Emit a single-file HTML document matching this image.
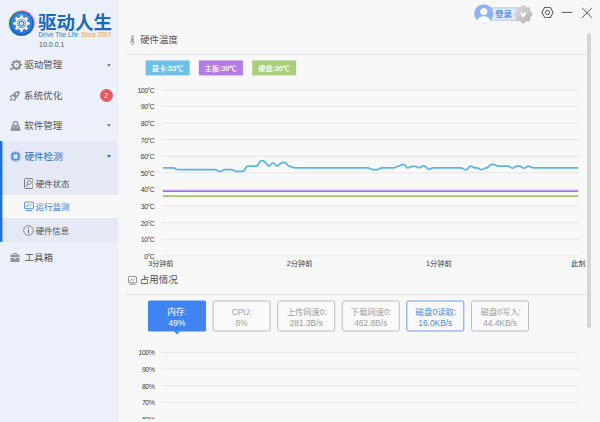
<!DOCTYPE html>
<html lang="zh-CN">
<head>
<meta charset="utf-8">
<title>驱动人生</title>
<style>
*{margin:0;padding:0;box-sizing:border-box}
html,body{width:600px;height:422px;overflow:hidden}
body{position:relative;background:#f8f8f8;font-family:"Liberation Sans",sans-serif;color:#444;font-size:9px;line-height:1}
.abs,.side div,.main div,svg{position:absolute}
.side{position:absolute;left:0;top:0;width:119px;height:422px;background:linear-gradient(90deg,#ebf0fa 0,#ebf0fa 118px,#f1f4f9 118px,#f1f4f9 119px)}
.arr{width:0;height:0;border-left:2.7px solid transparent;border-right:2.7px solid transparent;border-top:3.2px solid #838383}
.main{position:absolute;left:0;top:0;width:600px;height:422px}
.yl{left:119px;width:35.4px;text-align:right;font-size:6.9px;height:8px;line-height:8px;color:#3a3a3a;letter-spacing:-0.45px;white-space:nowrap}
.bx{top:300.5px;width:58px;height:31px;color:#9c9c9c;font-size:7.9px;text-align:center;white-space:nowrap}
.bx span{display:block;height:11.3px;line-height:11.3px}
.bx span:first-child{margin-top:6.2px}
.bx .la{font-size:8.3px}
.bx span+span{font-size:8.4px}
</style>
</head>
<body>
<div class="side">
  <!-- logo -->
  <div style="left:8.200px;top:9.800px;width:26.600px;height:26.600px;border-radius:50%;background:conic-gradient(#f9a9a4 0deg,#f28ee6 60deg,#a79bf6 125deg,#7ddff2 185deg,#8cf0c2 240deg,#eef08c 300deg,#f9a9a4 360deg)"></div>
  <svg style="left:8px;top:9.6px" width="27" height="27" viewBox="0 0 27 27">
    <defs>
      
      <radialGradient id="bg" cx="0.5" cy="0.3" r="0.75">
        <stop offset="0" stop-color="#4a9cec"/><stop offset="1" stop-color="#1f70cf"/>
      </radialGradient>
    </defs>
    
    <circle cx="13.5" cy="13.5" r="12.3" fill="#1d5fb8"/>
    <circle cx="13.5" cy="13.5" r="10.9" fill="url(#bg)"/>
    <g fill="#fcf3ec">
      <circle cx="13.5" cy="13.5" r="6.2"/>
      <g id="teeth">
        <rect x="12.2" y="5.200" width="2.600" height="3.400" rx="0.800"/>
        <rect x="12.2" y="18.400" width="2.600" height="3.400" rx="0.800"/>
        <rect x="5.200" y="12.2" width="3.400" height="2.600" rx="0.800"/>
        <rect x="18.400" y="12.2" width="3.400" height="2.600" rx="0.800"/>
      </g>
      <use href="#teeth" transform="rotate(45 13.5 13.5)"/>
    </g>
    <circle cx="13.5" cy="13.5" r="4.500" fill="#3a86da"/>
    <circle cx="13.5" cy="13.5" r="3.400" fill="none" stroke="#e4eefa" stroke-width="0.900"/>
    <circle cx="13.5" cy="13.5" r="1.600" fill="#fff"/>
  </svg>
  <svg style="left:38px;top:12.5px" width="74" height="19" viewBox="0 -20 4000 1040" preserveAspectRatio="none" role="img" aria-label="驱动人生"><title>驱动人生</title><text x="0" y="880" font-size="1000" font-weight="bold" fill="#1a69bd" font-family="'Liberation Sans','Noto Sans CJK SC',sans-serif">驱动人生</text></svg>
  <div style="left:38.5px;top:30.8px;width:45px;height:8px;line-height:8px;font-size:6.3px;color:#3577c4;white-space:nowrap;letter-spacing:0.05px">Drive The Life</div>
  <div style="left:81px;top:30.8px;width:35px;height:8px;line-height:8px;font-size:6.3px;color:#eaa04a;white-space:nowrap;letter-spacing:-0.18px">Since 2007</div>
  <div style="left:39.1px;top:39.7px;width:40px;height:10px;line-height:10px;font-size:7px;color:#555;white-space:nowrap">10.0.0.1</div>

  <!-- selected group background -->
  <div style="left:0;top:141px;width:118px;height:101px;background:#e4e9f5"></div>
  <div style="left:0;top:195px;width:119px;height:23px;background:#f8f8f8"></div>
  <svg style="left:0;top:141px" width="3" height="101"><rect x="0" y="0" width="2.4" height="100.8" fill="#1f6fe0"/></svg>

  <!-- 驱动管理 -->
  <svg style="left:8.800px;top:59.200px" width="13" height="13" viewBox="0 0 26 26">
    <g fill="#8c919c">
      <circle cx="15" cy="12" r="7.800"/>
      <g id="t2"><path d="M13.200 1.400h3.600l1 4h-5.600zM13.200 22.600h3.600l1-4h-5.600zM4.400 10.200v3.600l4 1v-5.600zM25.600 10.200v3.600l-4 1v-5.600z"/></g>
      <use href="#t2" transform="rotate(45 15 12)"/>
    </g>
    <circle cx="15" cy="12" r="4.800" fill="#f4f6fb"/>
    <circle cx="15" cy="12" r="1.500" fill="#8c919c"/>
    <path d="M4.600 19.600 9 17.500" stroke="#8c919c" stroke-width="1.600"/>
    <circle cx="4.400" cy="19.800" r="3" fill="#8c919c"/>
    <circle cx="4.400" cy="19.800" r="1.300" fill="#ebf0fa"/>
    <circle cx="22.500" cy="3" r="1.100" fill="#a6abb5"/>
  </svg>
  <div class="arr" style="left:107px;top:63.600px"></div>

  <!-- 系统优化 -->
  <svg style="left:9.200px;top:90px" width="11.800" height="11.800" viewBox="0 0 24 24">
    <path fill="#8c919c" fill-rule="evenodd" d="M22 2C15 2 9.500 5 6.300 10.600L13.400 17.700C19 14.500 22 9 22 2zM15.800 10.500a2.300 2.300 0 1 1 0-4.600 2.300 2.300 0 0 1 0 4.600zM6.500 9.800 2.300 11 1 15.200l4.600-.900zM14.200 17.500 13 21.700 8.800 23l.900-4.600zM5.300 15.800C3.200 16.800 2 19.500 2 22c2.500 0 5.200-1.200 6.200-3.300z"/>
  </svg>
  <div style="left:99.700px;top:89.200px;width:13px;height:13px;border-radius:50%;background:#ea5a5b;color:#fff;font-size:6.800px;line-height:13px;text-align:center">2</div>

  <!-- 软件管理 -->
  <svg style="left:10px;top:119.500px" width="11" height="12" viewBox="0 0 22 24">
    <path fill="none" stroke="#90959f" stroke-width="2.600" d="M6.500 10V7.500a4.500 4.500 0 0 1 9 0V10"/>
    <path fill="#90959f" d="M3.500 9.500h15l2.500 12.500H1z"/>
    <circle cx="7.500" cy="13.500" r="1.300" fill="#ebf0fa"/><circle cx="14.500" cy="13.500" r="1.300" fill="#ebf0fa"/>
  </svg>
  <div class="arr" style="left:107px;top:124.400px"></div>

  <!-- 硬件检测 -->
  <svg style="left:9.800px;top:151.200px" width="11" height="11" viewBox="0 0 22 22">
    <g stroke="#4a8df5" fill="none">
      <rect x="5" y="5" width="12" height="12" stroke-width="3.400"/>
      <path stroke-width="1.700" d="M7.500 1v3M11 1v3M14.500 1v3M7.500 18v3M11 18v3M14.500 18v3M1 7.500h3M1 11h3M1 14.500h3M18 7.500h3M18 11h3M18 14.500h3"/>
    </g>
  </svg>
  <div class="arr" style="left:107px;top:155.200px;border-top-color:#2a74e4"></div>

  <!-- 硬件状态 -->
  <svg style="left:23.800px;top:177.800px" width="9.500" height="11" viewBox="0 0 19 22">
    <rect x="1.100" y="1.100" width="16.800" height="19.800" rx="2" fill="none" stroke="#666" stroke-width="1.700"/>
    <circle cx="10.500" cy="9" r="3.800" fill="none" stroke="#666" stroke-width="1.500"/>
    <path d="M8 12 4.500 17.500" stroke="#666" stroke-width="1.900" fill="none"/>
  </svg>

  <!-- 运行监测 -->
  <svg style="left:23.800px;top:201px" width="10" height="11" viewBox="0 0 20 22">
    <rect x="1.100" y="2.100" width="17.800" height="13.300" rx="1.500" fill="none" stroke="#3c80e4" stroke-width="1.700"/>
    <path d="M4 12l4-4.500 3 2.500 4.500-4.500" fill="none" stroke="#3c80e4" stroke-width="1.500"/>
    <path d="M3.500 19.300h13" stroke="#3c80e4" stroke-width="1.700"/>
  </svg>

  <!-- 硬件信息 -->
  <svg style="left:23px;top:225px" width="11" height="11" viewBox="0 0 22 22">
    <circle cx="11" cy="11" r="9.600" fill="none" stroke="#666" stroke-width="1.500"/>
    <circle cx="11" cy="6.300" r="1.300" fill="#666"/>
    <path d="M11 9.500v7" stroke="#666" stroke-width="1.900"/>
  </svg>

  <!-- 工具箱 -->
  <svg style="left:10.100px;top:252.300px" width="10" height="10.600" viewBox="0 0 20 20" preserveAspectRatio="none">
    <path fill="none" stroke="#90959f" stroke-width="2" d="M7 5V3h6v2"/>
    <path fill="#90959f" d="M1 5h18v5H1zM1 11.500h7.500v1.500h3v-1.500H19V19H1z"/>
  </svg>
</div>

<!-- top right controls -->
<svg style="left:484px;top:7px" width="40" height="15"><rect x="0.500" y="0.900" width="38" height="12.300" rx="2" fill="#e0eafb" stroke="#adc8f6"/></svg>
<svg style="left:474.200px;top:4.200px" width="19.600" height="19.600" viewBox="0 0 36 36">
  <defs><clipPath id="av"><circle cx="18" cy="18" r="17.600"/></clipPath></defs>
  <circle cx="18" cy="18" r="17.600" fill="#8db3f6"/>
  <g clip-path="url(#av)" fill="#fff">
    <circle cx="18" cy="14" r="6.600"/>
    <path d="M5 36c0-9 5.500-13.500 13-13.500S31 27 31 36z"/>
  </g>
</svg>
<svg style="left:513.300px;top:3.900px" width="20.500" height="20.500" viewBox="0 0 20.500 20.500">
  <defs><linearGradient id="vg" x1="0" y1="0" x2="1" y2="1"><stop offset="0" stop-color="#dadada"/><stop offset="1" stop-color="#b4b4b4"/></linearGradient></defs>
  <path d="M10.250 1.550 L12.890 3.880 L16.400 4.100 L16.620 7.610 L18.950 10.250 L16.620 12.890 L16.400 16.400 L12.890 16.620 L10.250 18.950 L7.610 16.620 L4.100 16.400 L3.880 12.890 L1.550 10.250 L3.880 7.610 L4.100 4.100 L7.610 3.880Z" fill="url(#vg)" stroke="url(#vg)" stroke-width="1.500" stroke-linejoin="round"/>
  <path d="M7.900 8.300l2.350 4.200 2.350-4.200" fill="none" stroke="#fff" stroke-width="1.800" stroke-linejoin="round"/>
</svg>
<svg style="left:540.500px;top:6.300px" width="13" height="13" viewBox="0 0 28 28">
  <path d="M14 1.800 24.600 7.900v12.200L14 26.200 3.400 20.100V7.900z" transform="rotate(30 14 14)" fill="none" stroke="#4d4d4d" stroke-width="2"/>
  <circle cx="14" cy="14" r="4.700" fill="none" stroke="#4d4d4d" stroke-width="2"/>
</svg>
<svg style="left:560px;top:6px" width="36" height="14" viewBox="0 0 36 14">
  <path d="M2 6.400H12.200" stroke="#555" stroke-width="1"/>
  <path d="M22.200 2 31.800 11.600M31.800 2 22.200 11.600" stroke="#555" stroke-width="1" fill="none"/>
</svg>

<div class="main">
<svg style="left:0;top:0" width="600" height="422" viewBox="0 0 600 422">
  <!-- scrollbar -->
  <rect x="587" y="33" width="4" height="295" rx="2" fill="#d6d6d6"/>
  <!-- dividers -->
  <path d="M125.600 54.400H587M125.600 294.600H587" stroke="#e2e2e2" stroke-width="1"/>
  <g stroke="#e6e6e6" stroke-width="1"><path d="M161.2 89.90H578.8"/><path d="M161.2 106.50H578.8"/><path d="M161.2 123.10H578.8"/><path d="M161.2 139.70H578.8"/><path d="M161.2 156.30H578.8"/><path d="M161.2 172.90H578.8"/><path d="M161.2 189.50H578.8"/><path d="M161.2 206.10H578.8"/><path d="M161.2 222.70H578.8"/><path d="M161.2 239.30H578.8"/><path d="M161.2 255.90H578.8"/><path d="M161.2 352.60H578.8"/><path d="M161.2 369.15H578.8"/><path d="M161.2 385.70H578.8"/><path d="M161.2 402.25H578.8"/></g>
  <path d="M163 191.200H578.200" stroke="#b06df0" stroke-width="1.800" fill="none"/>
  <path d="M163 196.100H578.200" stroke="#9dc864" stroke-width="1.800" fill="none"/>
  <path d="M163.0 167.9 L172.90 167.90 Q174.20 167.90 175.31 168.57 L175.89 168.93 Q177.00 169.60 178.30 169.60 L214.40 169.60 Q215.70 169.60 216.84 170.22 L218.06 170.88 Q219.20 171.50 220.20 171.50 L220.20 171.50 Q221.20 171.50 222.24 170.71 L222.66 170.39 Q223.70 169.60 225.00 169.60 L231.20 169.60 Q232.50 169.60 233.61 170.27 L234.39 170.73 Q235.50 171.40 236.80 171.40 L242.40 171.40 Q243.70 171.40 244.34 170.27 L246.06 167.23 Q246.70 166.10 248.00 166.10 L256.20 166.10 Q257.50 166.10 258.06 164.93 L259.44 162.07 Q260.00 160.90 261.30 160.90 L262.90 160.90 Q264.20 160.90 265.01 161.91 L267.89 165.49 Q268.70 166.50 269.66 165.63 L272.04 163.47 Q273.00 162.60 273.98 163.45 L276.52 165.65 Q277.50 166.50 278.39 165.56 L280.31 163.54 Q281.20 162.60 282.50 162.60 L284.20 162.60 Q285.50 162.60 286.36 163.57 L287.84 165.23 Q288.70 166.20 289.95 166.35 L289.95 166.35 Q291.20 166.50 292.33 167.14 L292.57 167.26 Q293.70 167.90 295.00 167.90 L367.90 167.90 Q369.20 167.90 370.28 168.63 L370.62 168.87 Q371.70 169.60 373.00 169.60 L376.70 169.60 Q378.00 169.60 379.10 168.91 L379.60 168.59 Q380.70 167.90 382.00 167.90 L393.70 167.90 Q395.00 167.90 396.05 167.14 L396.45 166.86 Q397.50 166.10 398.50 166.10 L398.50 166.10 Q399.50 166.10 400.55 165.34 L400.95 165.06 Q402.00 164.30 403.00 164.30 L403.00 164.30 Q404.00 164.30 404.86 165.28 L406.64 167.32 Q407.50 168.30 408.64 167.68 L410.06 166.92 Q411.20 166.30 412.50 166.30 L414.90 166.30 Q416.20 166.30 417.31 166.97 L418.09 167.43 Q419.20 168.10 420.30 167.41 L422.10 166.29 Q423.20 165.60 424.10 165.85 L424.10 165.85 Q425.00 166.10 425.92 167.02 L427.78 168.88 Q428.70 169.80 429.83 169.15 L430.87 168.55 Q432.00 167.90 433.30 167.90 L460.70 167.90 Q462.00 167.90 463.10 168.60 L463.90 169.10 Q465.00 169.80 465.85 169.80 L465.85 169.80 Q466.70 169.80 467.57 168.83 L469.13 167.07 Q470.00 166.10 470.85 166.10 L470.85 166.10 Q471.70 166.10 472.79 166.80 L473.41 167.20 Q474.50 167.90 475.80 167.90 L476.70 167.90 Q478.00 167.90 479.10 168.59 L479.60 168.91 Q480.70 169.60 481.60 169.60 L481.60 169.60 Q482.50 169.60 483.63 168.96 L484.37 168.54 Q485.50 167.90 486.50 167.90 L486.50 167.90 Q487.50 167.90 488.36 166.93 L489.84 165.27 Q490.70 164.30 492.00 164.30 L493.20 164.30 Q494.50 164.30 495.61 164.97 L496.39 165.43 Q497.50 166.10 498.80 166.10 L507.40 166.10 Q508.70 166.10 509.78 166.82 L510.62 167.38 Q511.70 168.10 512.45 168.10 L512.45 168.10 Q513.20 168.10 514.28 167.38 L515.12 166.82 Q516.20 166.10 517.50 166.10 L519.20 166.10 Q520.50 166.10 521.54 166.87 L522.16 167.33 Q523.20 168.10 524.10 168.10 L524.10 168.10 Q525.00 168.10 526.10 167.41 L527.10 166.79 Q528.20 166.10 528.85 166.10 L528.85 166.10 Q529.50 166.10 530.61 166.77 L531.39 167.23 Q532.50 167.90 533.80 167.90 L578.2 167.9" stroke="#5ab4e3" stroke-width="1.700" fill="none" stroke-linejoin="round"/>
  <rect x="148.0" y="300.5" width="58" height="31" rx="1.5" fill="#3f84f2"/><path d="M174.1 331.3h5.8l-2.900 3.100z" fill="#3f84f2"/><rect x="213.1" y="301" width="57" height="30" rx="2" fill="#fafafa" stroke="#bcbcbc" stroke-width="1"/><rect x="277.7" y="301" width="57" height="30" rx="2" fill="#fafafa" stroke="#bcbcbc" stroke-width="1"/><rect x="342.2" y="301" width="57" height="30" rx="2" fill="#fafafa" stroke="#bcbcbc" stroke-width="1"/><rect x="406.8" y="301" width="57" height="30" rx="2" fill="#fafafa" stroke="#6d9ff2" stroke-width="1"/><rect x="471.5" y="301" width="57" height="30" rx="2" fill="#fafafa" stroke="#bcbcbc" stroke-width="1"/>
  <rect x="145.600" y="60.400" width="44" height="15" fill="#6dc0e8"/><rect x="198.900" y="60.400" width="44" height="15" fill="#b47ae8"/><rect x="252.200" y="60.400" width="44" height="15" fill="#a8cf7a"/>
</svg>
<!-- section 1 -->
<svg style="left:130.300px;top:35px" width="4.900" height="9.600" viewBox="0 0 12 22" preserveAspectRatio="none">
  <path d="M4.200 2.500a1.800 1.800 0 0 1 3.600 0v11.200a4 4 0 1 1-3.600 0z" fill="none" stroke="#777" stroke-width="1.600"/>
  <path d="M6 8v9" stroke="#777" stroke-width="1.600"/>
</svg>
<div class="yl" style="top:87px">100°C</div><div class="yl" style="top:103px">90°C</div><div class="yl" style="top:120px">80°C</div><div class="yl" style="top:137px">70°C</div><div class="yl" style="top:153px">60°C</div><div class="yl" style="top:170px">50°C</div><div class="yl" style="top:186px">40°C</div><div class="yl" style="top:203px">30°C</div><div class="yl" style="top:220px">20°C</div><div class="yl" style="top:236px">10°C</div><div class="yl" style="top:253px">0°C</div>

<!-- section 2 -->
<svg style="left:128px;top:275.700px" width="9" height="9" viewBox="0 0 18 18">
  <rect x="1" y="1" width="16" height="12.500" rx="1.500" fill="none" stroke="#777" stroke-width="1.600"/>
  <path d="M4 10l3.500-4 3 3 3.500-4" fill="none" stroke="#777" stroke-width="1.400"/>
  <path d="M3 16.500h12" stroke="#777" stroke-width="1.600"/>
</svg>

<div class="bx" style="left:148px;color:#fff"><span>&nbsp;</span><span>49%</span></div>
<div class="bx" style="left:212.600px"><span class="la">CPU:</span><span>8%</span></div>
<div class="bx" style="left:277.200px"><span>&nbsp;</span><span>281.3B/s</span></div>
<div class="bx" style="left:341.700px"><span>&nbsp;</span><span>462.8B/s</span></div>
<div class="bx" style="left:406.300px;color:#4a86e8"><span>&nbsp;</span><span>16.0KB/s</span></div>
<div class="bx" style="left:471px"><span>&nbsp;</span><span>44.4KB/s</span></div>
<div class="yl" style="top:349px">100%</div><div class="yl" style="top:366px">90%</div><div class="yl" style="top:383px">80%</div><div class="yl" style="top:399px">70%</div><div class="yl" style="top:416px">60%</div>
<!-- bottom clip of scroll area -->
<div style="left:119px;top:419px;width:481px;height:3px;background:#f8f8f8"></div>
</div>
<svg style="left:0;top:0;pointer-events:none" width="600" height="422" viewBox="0 0 600 422" font-family="'Liberation Sans','Noto Sans CJK SC',sans-serif">
<defs><clipPath id="ck"><rect x="560" y="255" width="25.600" height="20"/></clipPath></defs>
<text x="24.21" y="68.33" font-size="9.53" fill="#555">驱动管理</text>
<text x="23.83" y="98.88" font-size="9.64" fill="#555">系统优化</text>
<text x="24.13" y="129.34" font-size="9.55" fill="#555">软件管理</text>
<text x="24.60" y="159.84" font-size="9.52" fill="#2b6bcc">硬件检测</text>
<text x="35.64" y="186.61" font-size="8.43" fill="#555">硬件状态</text>
<text x="35.59" y="209.62" font-size="8.5" fill="#3377dd">运行监测</text>
<text x="35.64" y="233.50" font-size="8.35" fill="#555">硬件信息</text>
<text x="24.41" y="261.12" font-size="9.5" fill="#555">工具箱</text>
<text x="495.18" y="17.14" font-size="8.3" fill="#3f7fe2" stroke="#3f7fe2" stroke-width="0.15">登录</text>
<text x="140.21" y="43.20" font-size="9.44" fill="#505050">硬件温度</text>
<text x="139.83" y="283.37" font-size="9.47" fill="#505050">占用情况</text>
<text x="151.71" y="70.64" font-size="7.2" fill="#fff" stroke="#fff" stroke-width="0.16">显卡:53℃</text>
<text x="204.85" y="70.64" font-size="7.23" fill="#fff" stroke="#fff" stroke-width="0.16">主板:39℃</text>
<text x="258.28" y="70.66" font-size="7.18" fill="#fff" stroke="#fff" stroke-width="0.16">硬盘:36℃</text>
<text x="148.29" y="266.30" font-size="7.08" fill="#3a3a3a">3分钟前</text>
<text x="286.71" y="266.36" font-size="7.25" fill="#3a3a3a">2分钟前</text>
<text x="426.06" y="266.37" font-size="7.26" fill="#3a3a3a">1分钟前</text>
<g clip-path="url(#ck)"><text x="570.97" y="266.43" font-size="7.39" fill="#3a3a3a">此刻</text></g>
<text x="167.15" y="315.26" font-size="8.59" fill="#fff">内存:</text>
<text x="286.88" y="315.02" font-size="8.22" fill="#9c9c9c">上传网速0:</text>
<text x="350.84" y="315.06" font-size="8.33" fill="#9c9c9c">下载网速0:</text>
<text x="415.58" y="315.13" font-size="8.45" fill="#4a86e8">磁盘0读取:</text>
<text x="480.68" y="315.13" font-size="8.32" fill="#9c9c9c">磁盘0写入:</text>
</svg>
</body>
</html>
